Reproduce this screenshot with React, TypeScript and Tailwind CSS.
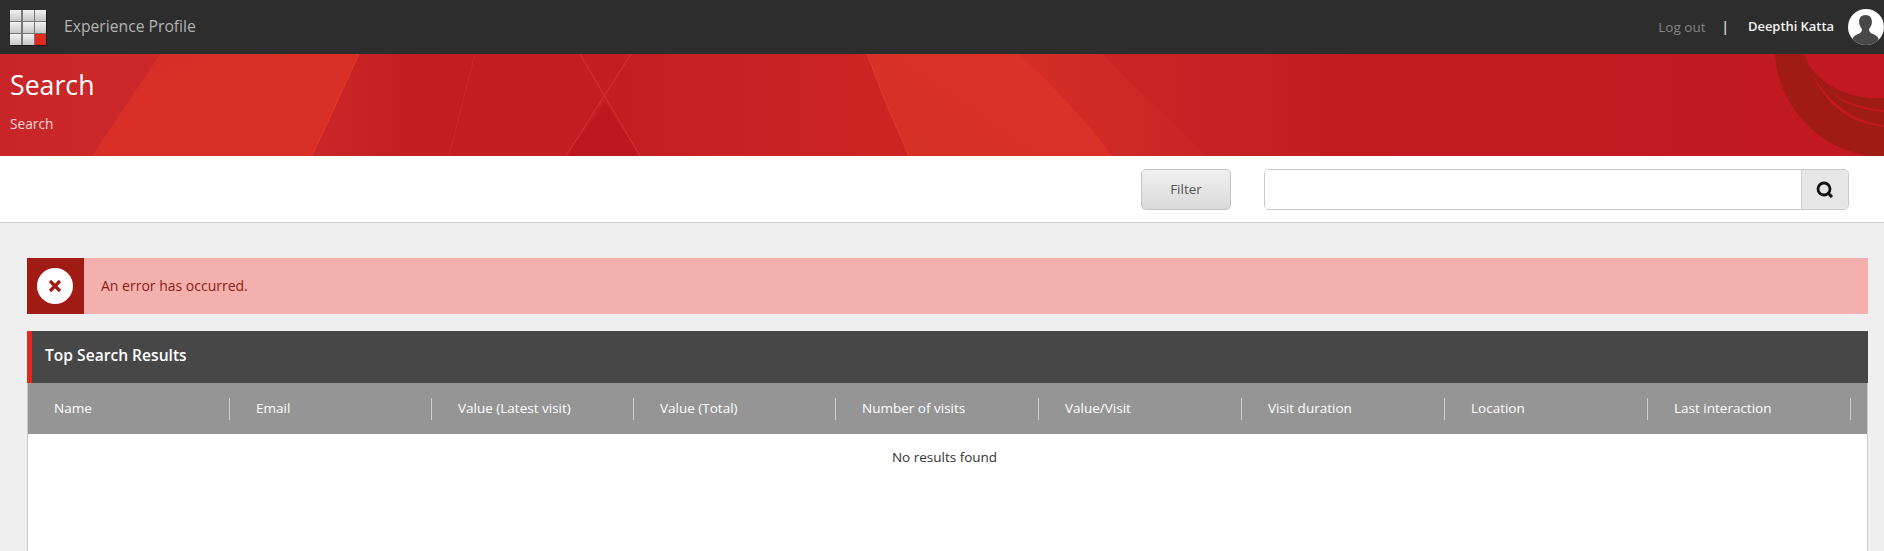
import React from 'react';

const columns = [
  { label: 'Name', width: 'w-[202px]' },
  { label: 'Email', width: 'w-[202px]' },
  { label: 'Value (Latest visit)', width: 'w-[202px]' },
  { label: 'Value (Total)', width: 'w-[202px]' },
  { label: 'Number of visits', width: 'w-[203px]' },
  { label: 'Value/Visit', width: 'w-[203px]' },
  { label: 'Visit duration', width: 'w-[203px]' },
  { label: 'Location', width: 'w-[203px]' },
  { label: 'Last interaction', width: 'w-[203px]' },
];

function AppLogo() {
  const cells = [0, 1, 2, 3, 4, 5, 6, 7];
  return (
    <div className="grid grid-cols-[11px_11px_11px] grid-rows-[11px_11px_11px] gap-x-[1.5px] gap-y-[1px] bg-[#777777] shadow-[1px_1px_0_#1a1a1a]">
      {cells.map((c) => (
        <div key={c} className="bg-gradient-to-b from-[#f2f2f2] to-[#c6c6c6]" />
      ))}
      <div className="bg-[#e02a20]" />
    </div>
  );
}

function Avatar() {
  return (
    <svg width="36" height="36" viewBox="0 0 36 36" className="shrink-0">
      <defs>
        <clipPath id="avatar-clip">
          <circle cx="18" cy="18" r="18" />
        </clipPath>
      </defs>
      <g clipPath="url(#avatar-clip)">
        <rect width="36" height="36" fill="#ffffff" />
        <path
          d="M17.5 6c-4.2 0-6.6 3-6.4 7 .1 2.600 1.100 5 2.700 6.700.4 2.500-.6 3.900-3 5-2.400 1-5.300 2-6.300 5v7h26v-7c-1-3-3.900-4-6.300-5-2.400-1.100-3.400-2.500-3-5 1.600-1.700 2.600-4.100 2.700-6.700.2-4-2.200-7-6.400-7z"
          fill="#484848"
        />
      </g>
    </svg>
  );
}

function BannerArt() {
  return (
    <svg
      className="absolute inset-0 h-full w-full"
      viewBox="0 0 1884 102"
      preserveAspectRatio="none"
    >
      <defs>
        <linearGradient id="banner-base" x1="0" x2="1" y1="0" y2="0">
          <stop offset="0" stopColor="#c72528" />
          <stop offset="0.05" stopColor="#cb2829" />
          <stop offset="0.17" stopColor="#cb2627" />
          <stop offset="0.22" stopColor="#c21d21" />
          <stop offset="0.33" stopColor="#c41e22" />
          <stop offset="0.4" stopColor="#c82224" />
          <stop offset="0.47" stopColor="#cd2423" />
          <stop offset="0.62" stopColor="#c92424" />
          <stop offset="0.72" stopColor="#c11b20" />
          <stop offset="1" stopColor="#c1191f" />
        </linearGradient>
        <linearGradient id="band-one" x1="0" x2="1" y1="0" y2="1">
          <stop offset="0" stopColor="#d52e27" />
          <stop offset="0.5" stopColor="#da2f27" />
          <stop offset="1" stopColor="#d92f27" />
        </linearGradient>
        <linearGradient id="band-two" x1="0" x2="1" y1="0.6" y2="0">
          <stop offset="0" stopColor="#d63127" />
          <stop offset="1" stopColor="#de3027" />
        </linearGradient>
        <linearGradient id="banner-fade" x1="0" x2="1" y1="0" y2="0">
          <stop offset="0" stopColor="#d32e27" />
          <stop offset="1" stopColor="#c92526" />
        </linearGradient>
      </defs>
      <rect width="1884" height="102" fill="url(#banner-base)" />
      <path d="M160 0H359L312 102H92Z" fill="url(#band-one)" />
      <path d="M867 0H1019Q1070 46 1113 102H909Q885 50 867 0Z" fill="url(#band-two)" />
      <path d="M1019 0H1102L1207 102H1113Q1070 46 1019 0Z" fill="url(#banner-fade)" />
      <path d="M605 49 640 102H566Z" fill="#bd1820" />
      <path d="M580 0 640 102M631 0 566 102" stroke="#d3352c" strokeWidth="1" fill="none" />
      <path d="M475 0 449 102" stroke="#cc2a28" strokeWidth="1" fill="none" />
      <path d="M359 0 312 102M867 0Q885 50 909 102" stroke="#e23a2f" strokeWidth="1" fill="none" />
      <path d="M1775 0A110 110 0 0 0 1884 103V0Z" fill="#a01b14" />
      <path d="M1804 0C1812 24 1840 46 1884 44V0Z" fill="#c1191f" />
      <path d="M1811 18C1825 50 1850 70 1884 73V71C1852 67 1828 48 1811 18Z" fill="#c1191f" />
      <path d="M1830 38C1844 50 1860 56 1884 58V56C1862 54 1846 48 1830 38Z" fill="#c1191f" />
    </svg>
  );
}

function SearchIcon() {
  return (
    <svg width="18" height="18" viewBox="0 0 18 18" fill="none" stroke="#111111">
      <circle cx="8" cy="8" r="6" strokeWidth="2.800" />
      <path d="M12 12l4 4" strokeWidth="3" />
    </svg>
  );
}

export default function App() {
  return (
    <div className="flex h-screen flex-col overflow-hidden bg-[#efefef] font-['Open_Sans',sans-serif] text-[13.5px]">
      {/* Top bar */}
      <header className="flex h-[54px] shrink-0 items-center bg-[#2d2d2d] pl-[10px]">
        <AppLogo />
        <span className="ml-[18px] -mt-[1px] text-[15.7px] text-[#b4b4b4]">Experience Profile</span>
        <div className="ml-auto flex items-center">
          <span className="text-[#858585]">Log out</span>
          <span className="ml-[16px] font-semibold text-[#e6e6e6]">|</span>
          <span className="ml-[19px] text-[13px] font-semibold tracking-[-0.05px] text-[#f2f2f2]">Deepthi Katta</span>
          <div className="ml-[14px]">
            <Avatar />
          </div>
        </div>
      </header>

      {/* Red banner */}
      <section className="relative h-[102px] shrink-0 overflow-hidden pl-[10px] text-white">
        <BannerArt />
        <div className="relative">
          <h1 className="mt-[13px] text-[26.7px] leading-[36px]">Search</h1>
          <p className="mt-[12px] text-[13.7px] leading-[18px] text-[#fbdada]">Search</p>
        </div>
      </section>

      {/* Filter toolbar */}
      <div className="flex h-[67px] shrink-0 items-start border-b border-[#cfcfcf] bg-white pt-[13px] pr-[35px]">
        <button className="ml-auto h-[41px] w-[90px] rounded-[5px] border border-[#c4c4c4] bg-gradient-to-b from-[#f1f1f1] to-[#d9d9d9] text-[#555555]">
          Filter
        </button>
        <div className="ml-[33px] flex h-[41px] w-[585px] overflow-hidden rounded-[5px] border border-[#c9c9c9]">
          <input aria-label="Search" className="min-w-0 flex-1 bg-white outline-none" />
          <button className="flex w-[47px] items-center justify-center border-l border-[#d2d2d2] bg-[#e6e6e6]">
            <SearchIcon />
          </button>
        </div>
      </div>

      {/* Content */}
      <main className="flex min-h-0 flex-1 flex-col pt-[35px] pr-[16px] pl-[27px]">
        <div className="flex h-[56px] shrink-0 items-center bg-[#f4b0ac] text-[14px] text-[#8b1c16]">
          <div className="flex h-full w-[57px] items-center justify-center bg-[#a01b14] pr-[2px]">
            <div className="flex h-[36px] w-[36px] items-center justify-center rounded-full bg-white">
              <svg width="14" height="14" viewBox="0 0 14 14" stroke="#a01b14" strokeWidth="3.200">
                <path d="M2 2l10 10M12 2 2 12" />
              </svg>
            </div>
          </div>
          <span className="ml-[17px] -mt-[2px]">An error has occurred.</span>
        </div>

        <div className="mt-[17px] flex h-[52px] shrink-0 items-center border-l-[5px] border-[#e0281f] bg-[#474747] pb-[3px] pl-[13px]">
          <h2 className="text-[15.6px] font-semibold text-white">Top Search Results</h2>
        </div>

        <div className="flex min-h-0 flex-1 flex-col border-x border-[#cccccc]">
          <div className="flex h-[51px] shrink-0 items-center bg-[#959595] text-white">
            {columns.map((col) => (
              <div key={col.label} className={`${col.width} shrink-0`}>
                <div className="flex h-[22px] items-center border-r border-[#d0d0d0] pl-[26px]">{col.label}</div>
              </div>
            ))}
          </div>
          <div className="flex-1 bg-white pt-[13px] pr-[6px] text-center text-[#333333]">No results found</div>
        </div>
      </main>
    </div>
  );
}
